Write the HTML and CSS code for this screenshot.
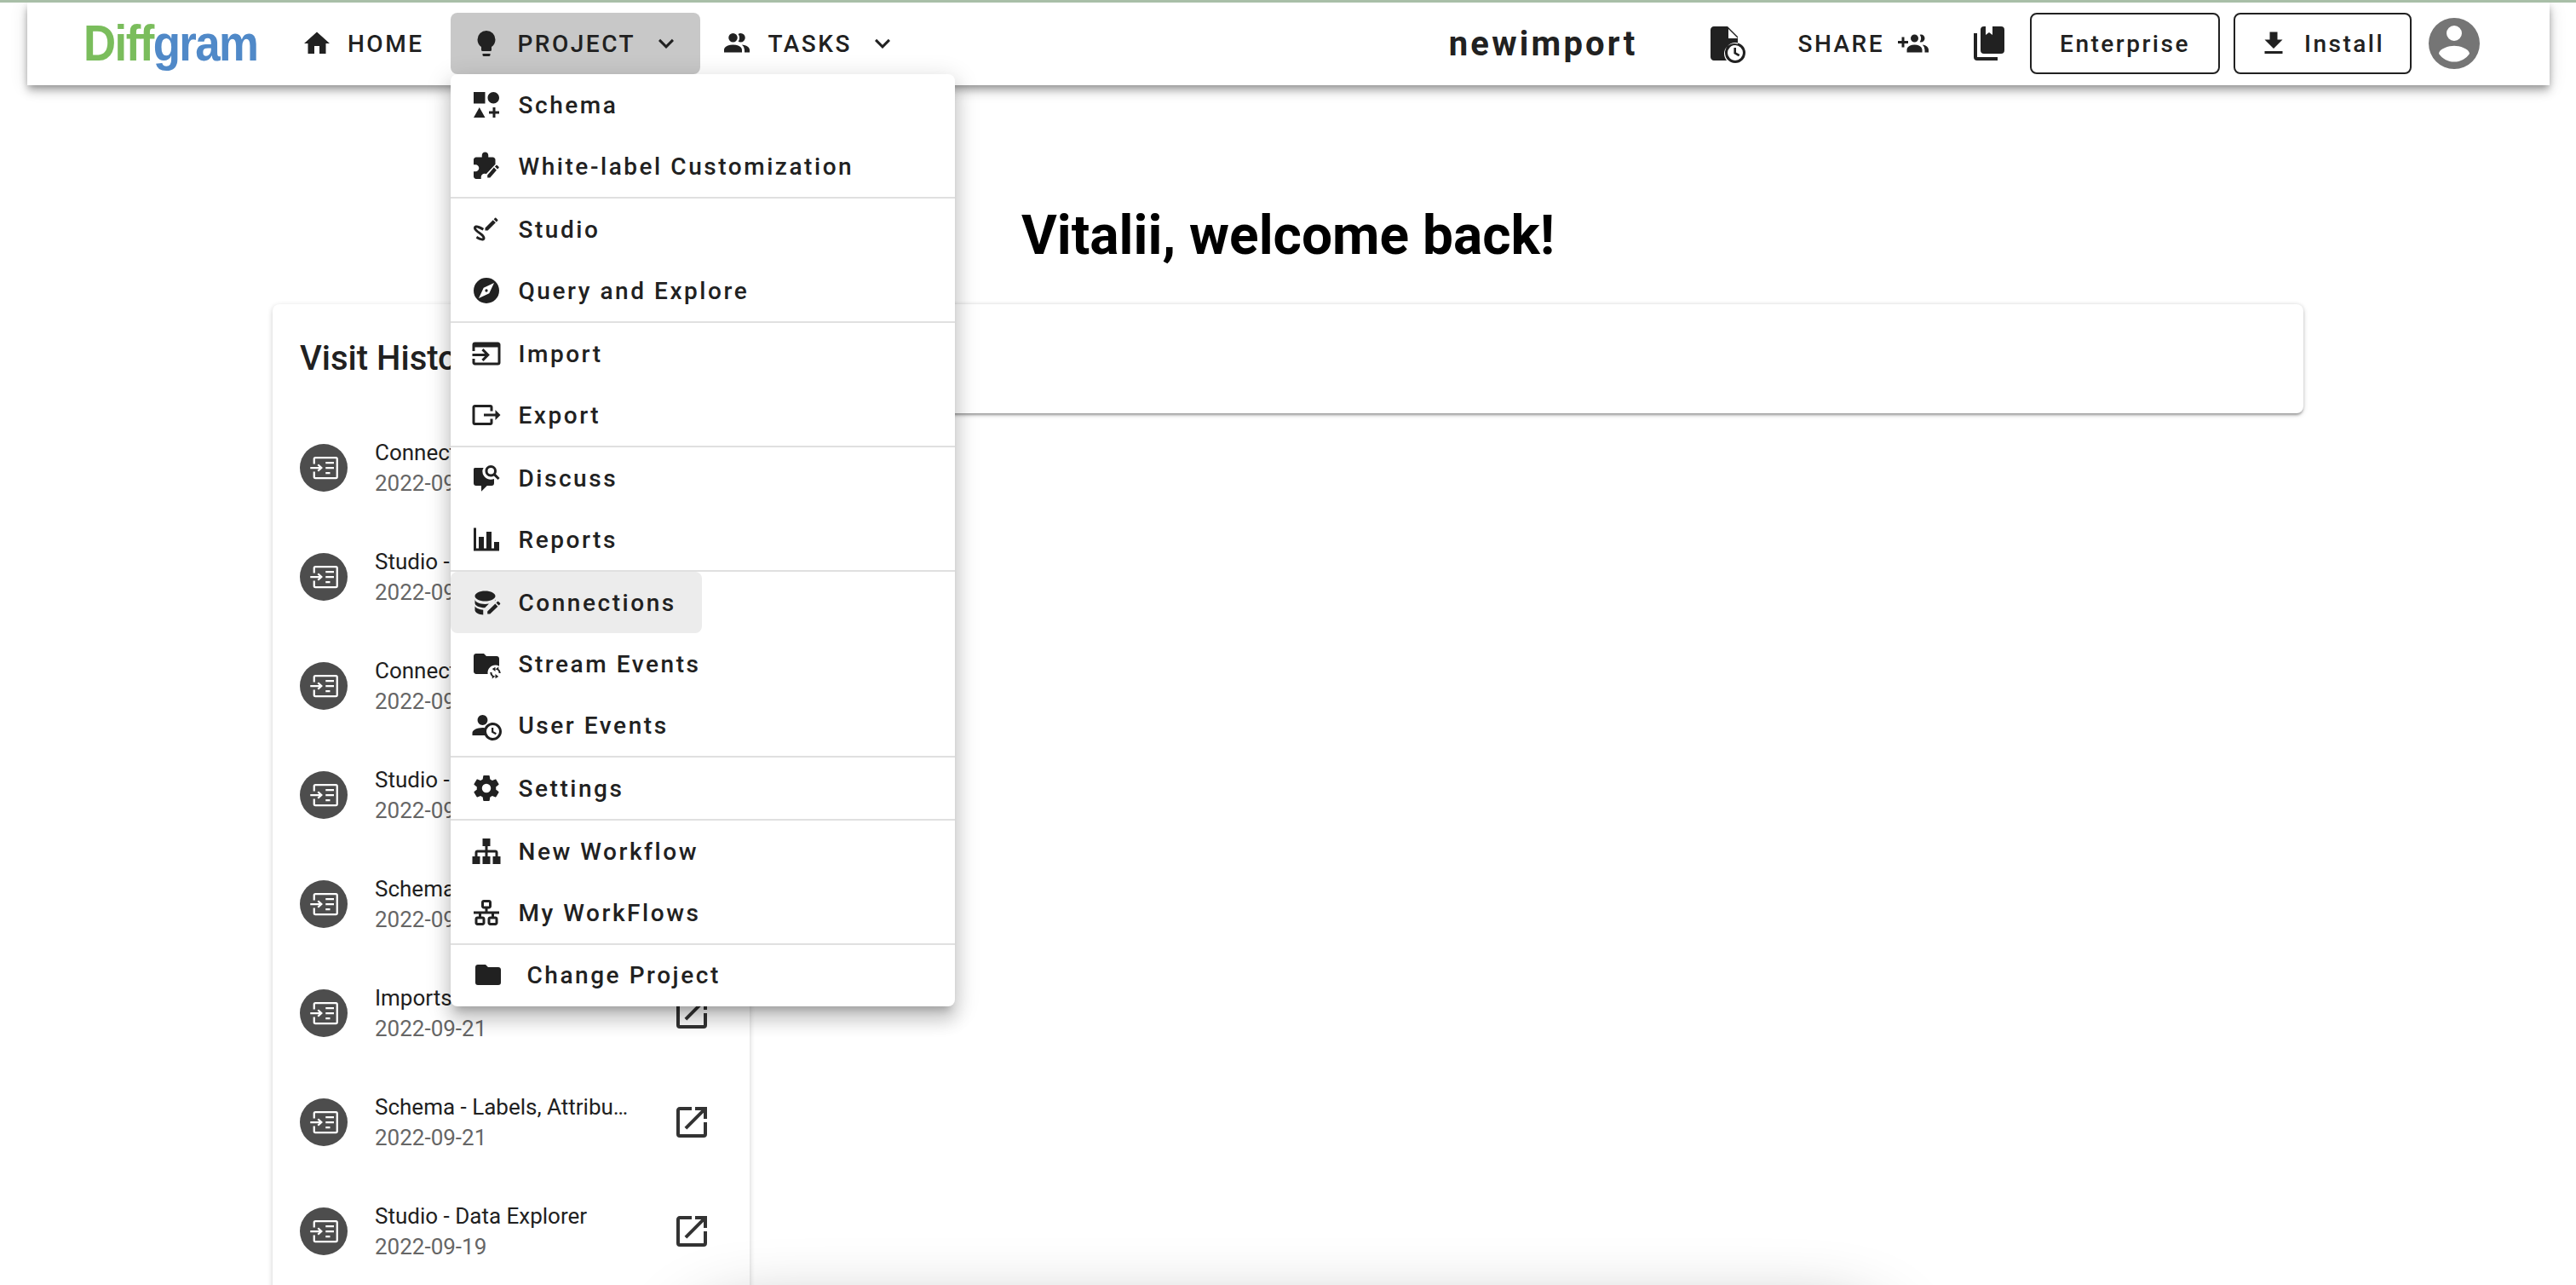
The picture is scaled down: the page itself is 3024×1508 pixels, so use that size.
FILE: index.html
```html
<!DOCTYPE html>
<html lang="en">
<head>
    <meta charset="UTF-8">
    <meta name="viewport" content="width=device-width, initial-scale=1.0">
    <title>Diffgram</title>
    <link rel="stylesheet" href="styles.css">
</head>
<body>
    <svg class="sprite" xmlns="http://www.w3.org/2000/svg">
        <symbol id="chevron" viewBox="0 0 24 24"><path d="M7.41,8.58L12,13.17L16.59,8.58L18,10L12,16L6,10L7.41,8.58Z"/></symbol>
        <symbol id="open" viewBox="0 0 24 24"><path d="M14,3V5H17.59L7.76,14.83L9.17,16.24L19,6.41V10H21V3M19,19H5V5H12V3H5C3.89,3 3,3.9 3,5V19A2,2 0 0,0 5,21H19A2,2 0 0,0 21,19V12H19V19Z"/></symbol>
        <symbol id="visit" viewBox="0 0 24 24"><path class="visit-line" d="M4.5 9V5A1 1 0 0 1 5.500 4H21.500A1 1 0 0 1 22.500 5V19A1 1 0 0 1 21.500 20H5.500A1 1 0 0 1 4.500 19V15M1.500 12H10M7.500 9.500L10.200 12L7.500 14.500M13.500 8H20M13.500 12H20M13.500 16H17"/></symbol>
    </svg>

    <header class="topbar">
        <a class="logo"><span class="logo-green">Diff</span><span class="logo-blue">gram</span></a>

        <nav class="nav">
            <a class="nav-btn nav-home">
                <svg class="icon" viewBox="0 0 24 24"><path d="M10,20V14H14V20H19V12H22L12,3L2,12H5V20H10Z"/></svg>
                HOME
            </a>
            <div class="nav-item">
                <a class="nav-btn nav-active">
                    <svg class="icon" viewBox="0 0 24 24"><path d="M12,2A7,7 0 0,0 5,9C5,11.38 6.19,13.47 8,14.74V17A1,1 0 0,0 9,18H15A1,1 0 0,0 16,17V14.74C17.81,13.47 19,11.38 19,9A7,7 0 0,0 12,2M9,21A1,1 0 0,0 10,22H14A1,1 0 0,0 15,21V20H9V21Z"/></svg>
                    PROJECT
                    <svg class="icon"><use href="#chevron"/></svg>
                </a>

                <div class="menu">
                    <a class="menu-row">
                        <svg class="icon" viewBox="0 0 24 24"><path d="M2,2H11V11H2V2M17.5,2C20,2 22,4 22,6.5C22,9 20,11 17.5,11C15,11 13,9 13,6.5C13,4 15,2 17.5,2M6.5,14L11,22H2L6.5,14M19,17H22V19H19V22H17V19H14V17H17V14H19V17Z"/></svg>
                        Schema
                    </a>
                    <a class="menu-row">
                        <svg class="icon" viewBox="0 0 24 24"><path d="M19 10.500V7C19 5.900 18.100 5 17 5H13.500V3.500C13.500 2.100 12.400 1 11 1S8.500 2.100 8.500 3.500V5H4C2.900 5 2 5.900 2 7V10.800H3.500C5 10.800 6.200 12 6.200 13.500S5 16.200 3.500 16.200H2V20C2 21.100 2.900 22 4 22H7.800V20.500C7.800 19 9 17.800 10.500 17.800C11 17.800 11.400 17.900 11.800 18.100Z"/><path d="M21.700 13.350L20.700 14.350L18.650 12.300L19.650 11.300C19.860 11.090 20.210 11.090 20.420 11.300L21.700 12.580C21.910 12.790 21.910 13.140 21.700 13.350M12.800 18.940L17.900 13.050L19.950 15.100L14.860 21H12.800V18.940Z"/></svg>
                        White-label Customization
                    </a>
                    <div class="menu-divider"></div>
                    <a class="menu-row">
                        <svg class="icon" viewBox="0 0 24 24"><path d="M9.75 20.85C11.53 20.15 11.14 18.22 10.24 17C9.35 15.75 8.12 14.89 6.88 14.06C6 13.5 5.19 12.8 4.54 12C4.26 11.67 3.69 11.06 4.27 10.94C4.86 10.82 5.88 11.4 6.4 11.62C7.31 12 8.21 12.44 9.05 12.96L10.06 11.26C8.5 10.23 6.5 9.32 4.64 9.05C3.58 8.89 2.46 9.11 2.1 10.26C1.78 11.25 2.29 12.25 2.87 13.03C4.24 14.86 6.37 15.74 7.96 17.32C8.3 17.65 8.71 18.04 8.91 18.5C9.12 18.94 9.07 18.97 8.6 18.97C7.36 18.97 5.81 18 4.8 17.36L3.79 19.06C5.32 20 7.88 21.47 9.75 20.85M20.84 5.25C21.06 5.03 21.06 4.67 20.84 4.46L19.54 3.16C19.33 2.94 18.97 2.94 18.76 3.16L17.74 4.18L19.82 6.26M11 10.92V13H13.08L19.23 6.85L17.15 4.77L11 10.92Z"/></svg>
                        Studio
                    </a>
                    <a class="menu-row">
                        <svg class="icon" viewBox="0 0 24 24"><path d="M14.19,14.19L6,18L9.81,9.81L18,6M12,2A10,10 0 0,0 2,12A10,10 0 0,0 12,22A10,10 0 0,0 22,12A10,10 0 0,0 12,2M12,10.9A1.1,1.1 0 0,0 10.9,12A1.1,1.1 0 0,0 12,13.1A1.1,1.1 0 0,0 13.1,12A1.1,1.1 0 0,0 12,10.9Z"/></svg>
                        Query and Explore
                    </a>
                    <div class="menu-divider"></div>
                    <a class="menu-row">
                        <svg class="icon" viewBox="0 0 24 24"><path d="M1,12H10.76L8.26,9.5L9.67,8.08L14.59,13L9.67,17.92L8.26,16.5L10.76,14H1V12M21,3C22.11,3 23,3.9 23,5V19A2,2 0 0,1 21,21H3C1.89,21 1,20.100 1,19V16H3V19H21V7H3V10H1V5A2,2 0 0,1 3,3H21Z"/></svg>
                        Import
                    </a>
                    <a class="menu-row">
                        <svg class="icon" viewBox="0 0 24 24"><path d="M23,12L19,8V11H10V13H19V16M1,18V6C1,4.89 1.9,4 3,4H15A2,2 0 0,1 17,6V9H15V6H3V18H15V15H17V18A2,2 0 0,1 15,20H3A2,2 0 0,1 1,18Z"/></svg>
                        Export
                    </a>
                    <div class="menu-divider"></div>
                    <a class="menu-row">
                        <svg class="icon" viewBox="0 0 24 24"><path d="M15.500,2C18,2 20,4 20,6.500C20,7.380 19.750,8.210 19.310,8.900L22.390,12L21,13.390L17.880,10.320C17.190,10.750 16.370,11 15.500,11C13,11 11,9 11,6.500C11,4 13,2 15.500,2M15.500,4A2.500,2.500 0 0,0 13,6.500A2.500,2.500 0 0,0 15.500,9A2.500,2.500 0 0,0 18,6.500A2.500,2.500 0 0,0 15.500,4M3,4H9.800C9.200,5 8.900,5.700 8.900,6.800A6.600,6.600 0 0,0 18,12.700V16A2,2 0 0,1 16,18H12.500L8,22.500V18H4A2,2 0 0,1 2,16V5A1,1 0 0,1 3,4Z"/></svg>
                        Discuss
                    </a>
                    <a class="menu-row">
                        <svg class="icon" viewBox="0 0 24 24"><path d="M22,21H2V3H4V19H6V10H10V19H12V6H16V19H18V14H22V21Z"/></svg>
                        Reports
                    </a>
                    <div class="menu-divider"></div>
                    <a class="menu-row menu-hover">
                        <svg class="icon" viewBox="0 0 24 24"><path d="M11,3C6.600,3 3,4.800 3,7C3,9.200 6.600,11 11,11C15.400,11 19,9.200 19,7C19,4.800 15.400,3 11,3M3,9.500V12.500C3,14.500 6.600,16.200 10.800,16.200L14,13C13,13.200 12,13.300 11,13.300C6.600,13.300 3,11.700 3,9.500M19,9.500C19,10 18.800,10.500 18.400,10.900L19,10.700V9.500M3,15V18C3,20 6.100,21.500 9.500,21.700V17.800C6.500,17.600 3.800,16.500 3,15Z"/><path d="M22.700,13.350L21.700,14.350L19.650,12.300L20.650,11.300C20.860,11.090 21.210,11.090 21.420,11.300L22.700,12.580C22.910,12.790 22.910,13.140 22.700,13.350M12.800,18.940L18.900,13.050L20.950,15.100L14.860,21H12.800V18.940Z"/></svg>
                        Connections
                    </a>
                    <a class="menu-row">
                        <svg class="icon" viewBox="0 0 24 24"><path d="M13,19C13,15.690 15.690,13 19,13C20.100,13 21.120,13.300 22,13.810V8C22,6.890 21.110,6 20,6H12L10,4H4C2.890,4 2,4.890 2,6V18C2,19.110 2.900,20 4,20H13.090C13.040,19.670 13,19.340 13,19M19,14.500V16.300L21.500,14.400V16A4.300,4.300 0 0,1 23.200,19.300H21.700A2.800,2.800 0 0,0 19,16.300V18L16.500,16ZM19,23.500V21.700L16.500,23.600V22A4.300,4.300 0 0,1 14.800,18.700H16.300A2.800,2.800 0 0,0 19,21.700V20L21.500,22Z"/></svg>
                        Stream Events
                    </a>
                    <a class="menu-row">
                        <svg class="icon" viewBox="0 0 24 24"><path d="M10.63,14.1C12.23,10.58 16.38,9.03 19.9,10.63C23.42,12.23 24.97,16.38 23.37,19.9C22.24,22.4 19.75,24 17,24C14.3,24 11.83,22.44 10.67,20H1V18C1.06,16.86 1.84,15.93 3.34,15.18C4.84,14.43 6.72,14.04 9,14C9.57,14 10.11,14.05 10.63,14.1V14.1M9,4C10.12,4.03 11.06,4.42 11.81,5.17C12.56,5.92 12.93,6.86 12.93,8C12.93,9.14 12.56,10.08 11.81,10.83C11.06,11.58 10.12,11.95 9,11.95C7.88,11.95 6.94,11.58 6.19,10.83C5.44,10.08 5.07,9.14 5.07,8C5.07,6.86 5.44,5.92 6.19,5.17C6.94,4.42 7.88,4.03 9,4M17,22A5,5 0 0,0 22,17A5,5 0 0,0 17,12A5,5 0 0,0 12,17A5,5 0 0,0 17,22M16,14H17.5V16.82L19.94,18.23L19.19,19.53L16,17.69V14Z"/></svg>
                        User Events
                    </a>
                    <div class="menu-divider"></div>
                    <a class="menu-row">
                        <svg class="icon" viewBox="0 0 24 24"><path d="M12,15.5A3.5,3.5 0 0,1 8.5,12A3.5,3.5 0 0,1 12,8.5A3.5,3.5 0 0,1 15.5,12A3.5,3.5 0 0,1 12,15.5M19.43,12.97C19.47,12.65 19.5,12.33 19.5,12C19.5,11.67 19.47,11.34 19.43,11L21.54,9.37C21.73,9.22 21.78,8.95 21.66,8.73L19.66,5.27C19.54,5.05 19.27,4.96 19.05,5.05L16.56,6.05C16.04,5.66 15.5,5.32 14.87,5.07L14.5,2.42C14.46,2.18 14.25,2 14,2H10C9.75,2 9.54,2.18 9.5,2.42L9.13,5.07C8.5,5.32 7.96,5.66 7.44,6.05L4.95,5.05C4.73,4.96 4.46,5.05 4.34,5.27L2.34,8.73C2.21,8.95 2.27,9.22 2.46,9.37L4.57,11C4.53,11.34 4.5,11.67 4.5,12C4.5,12.33 4.53,12.65 4.57,12.97L2.46,14.63C2.27,14.78 2.21,15.05 2.34,15.27L4.34,18.73C4.46,18.95 4.73,19.03 4.95,18.95L7.44,17.94C7.96,18.34 8.5,18.68 9.13,18.93L9.5,21.58C9.54,21.82 9.75,22 10,22H14C14.25,22 14.46,21.82 14.5,21.58L14.87,18.93C15.5,18.67 16.04,18.34 16.56,17.94L19.05,18.95C19.27,19.03 19.54,18.95 19.66,18.73L21.66,15.27C21.78,15.05 21.73,14.78 21.54,14.63L19.43,12.97Z"/></svg>
                        Settings
                    </a>
                    <div class="menu-divider"></div>
                    <a class="menu-row">
                        <svg class="icon" viewBox="0 0 24 24"><path d="M9,2V8H11V11H5C3.89,11 3,11.89 3,13V16H1V22H7V16H5V13H11V16H9V22H15V16H13V13H19V16H17V22H23V16H21V13C21,11.89 20.11,11 19,11H13V8H15V2H9Z"/></svg>
                        New Workflow
                    </a>
                    <a class="menu-row">
                        <svg class="icon" viewBox="0 0 24 24"><path d="M10,2C8.89,2 8,2.89 8,4V7C8,8.11 8.89,9 10,9H11V11H2V13H6V15H5C3.89,15 3,15.89 3,17V20C3,21.11 3.89,22 5,22H9C10.11,22 11,21.11 11,20V17C11,15.89 10.11,15 9,15H8V13H16V15H15C13.89,15 13,15.89 13,17V20C13,21.11 13.89,22 15,22H19C20.11,22 21,21.11 21,20V17C21,15.89 20.11,15 19,15H18V13H22V11H13V9H14C15.11,9 16,8.11 16,7V4C16,2.89 15.11,2 14,2H10M10,4H14V7H10V4M5,17H9V20H5V17M15,17H19V20H15V17Z"/></svg>
                        My WorkFlows
                    </a>
                    <div class="menu-divider"></div>
                    <a class="menu-row menu-change">
                        <svg class="icon" viewBox="0 0 24 24"><path d="M10,4H4C2.89,4 2,4.89 2,6V18A2,2 0 0,0 4,20H20A2,2 0 0,0 22,18V8C22,6.89 21.1,6 20,6H12L10,4Z"/></svg>
                        Change Project
                    </a>
                </div>
            </div>
            <a class="nav-btn nav-tasks">
                <svg class="icon" viewBox="0 0 24 24"><path d="M16 17V19H2V17S2 13 9 13 16 17 16 17M12.5 7.5A3.5 3.5 0 1 0 9 11A3.5 3.5 0 0 0 12.5 7.5M15.94 13A5.32 5.32 0 0 1 18 17V19H22V17S22 13.37 15.94 13M15 4A3.39 3.39 0 0 0 13.07 4.59A5 5 0 0 1 13.07 10.41A3.39 3.39 0 0 0 15 11A3.5 3.5 0 0 0 15 4Z"/></svg>
                TASKS
                <svg class="icon"><use href="#chevron"/></svg>
            </a>
        </nav>

        <div class="topbar-right">
            <span class="project-name">newimport</span>
            <svg class="icon icon-lg file-clock" viewBox="0 0 24 24"><path fill-rule="evenodd" d="M12,2H4C2.900,2 2,2.900 2,4V20C2,21.100 2.900,22 4,22H11.500C10.600,20.900 10,19.500 10,18C10,14.700 12.700,12 16,12C16.700,12 17.400,12.100 18,12.400V8L12,2M12.500,9V3.500L18,9H12.500M16.500,23.500A6,6 0 1,0 16.500,11.500A6,6 0 1,0 16.500,23.500M16.500,22A4.500,4.500 0 1,1 16.500,13A4.500,4.500 0 1,1 16.500,22M15.700,14.500H17V17.200L19.200,18.500L18.500,19.600L15.700,18Z"/></svg>
            <a class="share-btn">
                SHARE
                <svg class="icon" viewBox="0 0 24 24"><path d="M19 17V19H7V17S7 13 13 13 19 17 19 17M16 8A3 3 0 1 0 13 11A3 3 0 0 0 16 8M19.2 13.06A5.6 5.6 0 0 1 21 17V19H24V17S24 13.55 19.2 13.06M18 5A2.91 2.91 0 0 0 17.11 5.14A5 5 0 0 1 17.11 10.86A2.91 2.91 0 0 0 18 11A3 3 0 0 0 18 5M8 10H5V7H3V10H0V12H3V15H5V12H8Z"/></svg>
            </a>
            <svg class="icon icon-lg book" viewBox="0 0 24 24"><path d="M19,18H9A2,2 0 0,1 7,16V4A2,2 0 0,1 9,2H10V7L12,5.5L14,7V2H19A2,2 0 0,1 21,4V16A2,2 0 0,1 19,18M17,20V22H5A2,2 0 0,1 3,20V6H5V20H17Z"/></svg>
            <a class="outline-btn btn-enterprise">Enterprise</a>
            <a class="outline-btn btn-install">
                <svg class="icon" viewBox="0 0 24 24"><path d="M5,20H19V18H5M19,9H15V3H9V9H5L12,16L19,9Z"/></svg>
                Install
            </a>
            <svg class="avatar" viewBox="0 0 24 24"><path d="M12,19.2C9.5,19.2 7.29,17.92 6,16C6.03,14 10,12.9 12,12.9C14,12.9 17.97,14 18,16C16.71,17.92 14.5,19.2 12,19.2M12,5A3,3 0 0,1 15,8A3,3 0 0,1 12,11A3,3 0 0,1 9,8A3,3 0 0,1 12,5M12,2A10,10 0 0,0 2,12A10,10 0 0,0 12,22A10,10 0 0,0 22,12A10,10 0 0,0 12,2Z"/></svg>
        </div>
    </header>

    <main class="page">
        <h1 class="welcome">Vitalii, welcome back!</h1>

        <div class="columns">
            <section class="history-card">
                <h2 class="history-title">Visit History</h2>

                <div class="history-row">
                    <span class="history-dot"><svg><use href="#visit"/></svg></span>
                    <div class="history-text"><div class="history-name">Connections</div><div class="history-date">2022-09-21</div></div>
                    <svg class="history-open"><use href="#open"/></svg>
                </div>
                <div class="history-row">
                    <span class="history-dot"><svg><use href="#visit"/></svg></span>
                    <div class="history-text"><div class="history-name">Studio - Data Explorer</div><div class="history-date">2022-09-21</div></div>
                    <svg class="history-open"><use href="#open"/></svg>
                </div>
                <div class="history-row">
                    <span class="history-dot"><svg><use href="#visit"/></svg></span>
                    <div class="history-text"><div class="history-name">Connections</div><div class="history-date">2022-09-21</div></div>
                    <svg class="history-open"><use href="#open"/></svg>
                </div>
                <div class="history-row">
                    <span class="history-dot"><svg><use href="#visit"/></svg></span>
                    <div class="history-text"><div class="history-name">Studio - Data Explorer</div><div class="history-date">2022-09-21</div></div>
                    <svg class="history-open"><use href="#open"/></svg>
                </div>
                <div class="history-row">
                    <span class="history-dot"><svg><use href="#visit"/></svg></span>
                    <div class="history-text"><div class="history-name">Schema - Labels, Attributes</div><div class="history-date">2022-09-21</div></div>
                    <svg class="history-open"><use href="#open"/></svg>
                </div>
                <div class="history-row">
                    <span class="history-dot"><svg><use href="#visit"/></svg></span>
                    <div class="history-text"><div class="history-name">Imports</div><div class="history-date">2022-09-21</div></div>
                    <svg class="history-open"><use href="#open"/></svg>
                </div>
                <div class="history-row">
                    <span class="history-dot"><svg><use href="#visit"/></svg></span>
                    <div class="history-text"><div class="history-name">Schema - Labels, Attributes, and Instance Templates</div><div class="history-date">2022-09-21</div></div>
                    <svg class="history-open"><use href="#open"/></svg>
                </div>
                <div class="history-row">
                    <span class="history-dot"><svg><use href="#visit"/></svg></span>
                    <div class="history-text"><div class="history-name">Studio - Data Explorer</div><div class="history-date">2022-09-19</div></div>
                    <svg class="history-open"><use href="#open"/></svg>
                </div>
            </section>

            <section class="summary-card"></section>
        </div>
    </main>

    <div class="offscreen-panel"></div>
</body>
</html>
```

FILE: styles.css
```css
* {
    box-sizing: border-box;
}

html, body {
    height: 1508px;
    overflow: hidden;
}

body {
    margin: 0;
    padding: 0;
    background: #ffffff;
    font-family: Roboto, "Noto Sans", sans-serif;
    color: #212121;
    border-top: 3px solid #a9bfa8;
    position: relative;
}

.sprite {
    display: none;
}

.icon {
    width: 36px;
    height: 36px;
    fill: currentColor;
    flex: none;
}

.icon-lg {
    width: 48px;
    height: 48px;
}

/* Top bar */
.topbar {
    position: relative;
    z-index: 5;
    height: 97px;
    margin: 0 31px 0 32px;
    padding: 0 76px 1px 66px;
    background: #ffffff;
    display: flex;
    align-items: center;
    box-shadow: 0 4px 8px -2px rgba(0, 0, 0, 0.3), 0 8px 10px rgba(0, 0, 0, 0.16), 0 2px 20px rgba(0, 0, 0, 0.12);
}

.logo {
    font-family: "Liberation Sans", Arial, sans-serif;
    font-weight: 700;
    font-size: 60px;
    letter-spacing: -1.8px;
    line-height: 1;
    width: 224px;
    flex: none;
    white-space: nowrap;
    transform: scaleX(0.88);
    transform-origin: left center;
}

.logo-green {
    color: #7abd5c;
}

.logo-blue {
    color: #5089c8;
}

.nav {
    display: flex;
    align-items: center;
}

.nav-item {
    position: relative;
}

.nav-btn {
    height: 72px;
    display: flex;
    align-items: center;
    gap: 18px;
    font-size: 28px;
    font-weight: 470;
    letter-spacing: 2.5px;
    border-radius: 8px;
    white-space: nowrap;
}

.nav-home {
    padding: 0 32px;
}

.nav-active {
    width: 293px;
    padding: 0 22px 0 24px;
    background: #c8c8c8;
}

.nav-tasks {
    padding: 0 22px 0 25px;
}

.topbar-right {
    margin-left: auto;
    display: flex;
    align-items: center;
}

.project-name {
    font-size: 40px;
    font-weight: 700;
    letter-spacing: 3.2px;
    margin-right: 82px;
}

.share-btn {
    display: flex;
    align-items: center;
    gap: 16px;
    font-size: 28px;
    font-weight: 470;
    letter-spacing: 2.5px;
    margin-left: 58px;
}

.book {
    margin-left: 47px;
}

.outline-btn {
    height: 72px;
    display: flex;
    align-items: center;
    gap: 18px;
    border: 2px solid #212121;
    border-radius: 8px;
    font-size: 28px;
    font-weight: 470;
    letter-spacing: 2.5px;
}

.btn-enterprise {
    width: 223px;
    justify-content: center;
    margin-left: 24px;
}

.btn-install {
    width: 209px;
    padding-left: 27px;
    margin-left: 16px;
}

.avatar {
    width: 72px;
    height: 72px;
    margin-left: 14px;
    fill: #757575;
}

/* Project dropdown */
.menu {
    position: absolute;
    top: 72px;
    left: 0;
    z-index: 10;
    width: 592px;
    background: #ffffff;
    border-radius: 8px;
    box-shadow: 0 10px 10px -6px rgba(0, 0, 0, 0.2), 0 16px 20px 2px rgba(0, 0, 0, 0.14), 0 6px 28px 4px rgba(0, 0, 0, 0.12);
}

.menu-row {
    height: 72px;
    display: flex;
    align-items: center;
    gap: 19px;
    padding-left: 24px;
    font-size: 28px;
    font-weight: 470;
    letter-spacing: 2.55px;
    white-space: nowrap;
}

.menu-divider {
    height: 2px;
    background: #e0e0e0;
}

.menu-hover {
    width: 295px;
    background: #ececec;
    border-radius: 8px;
}

.menu-change {
    padding-left: 26px;
    padding-bottom: 2px;
    gap: 27px;
}

/* Page body */
.page {
    padding-left: 320px;
    width: 2704px;
}

.welcome {
    margin: 0;
    padding: 137px 0 40px;
    width: 2384px;
    text-align: center;
    font-size: 64px;
    line-height: 80px;
    font-weight: 700;
    color: #000000;
}

.columns {
    display: flex;
    align-items: flex-start;
}

.history-card {
    width: 560px;
    height: 1300px;
    flex: none;
    padding: 32px 32px 0;
    background: #ffffff;
    border-radius: 8px;
    box-shadow: 0 2px 6px rgba(0, 0, 0, 0.2);
}

.history-title {
    margin: 0 0 32px;
    font-size: 40px;
    line-height: 64px;
    font-weight: 500;
    white-space: nowrap;
}

.history-row {
    height: 128px;
    display: flex;
    align-items: center;
}

.history-dot {
    width: 56px;
    height: 56px;
    flex: none;
    border-radius: 50%;
    background: #4d4d4d;
    display: flex;
    align-items: center;
    justify-content: center;
}

.history-dot svg {
    width: 36px;
    height: 36px;
}

.visit-line {
    fill: none;
    stroke: #ffffff;
    stroke-width: 1.5;
}

.history-text {
    width: 304px;
    margin-left: 32px;
}

.history-name {
    font-size: 26px;
    line-height: 36px;
    font-weight: 400;
    white-space: nowrap;
    overflow: hidden;
    text-overflow: ellipsis;
}

.history-date {
    font-size: 26px;
    line-height: 36px;
    color: #666666;
}

.history-open {
    width: 48px;
    height: 48px;
    flex: none;
    margin-left: 44px;
    fill: #333333;
}

.summary-card {
    flex: 1;
    height: 128px;
    background: #ffffff;
    border-radius: 8px;
    box-shadow: 0 3px 3px -1px rgba(0, 0, 0, 0.3), 0 2px 6px rgba(0, 0, 0, 0.14), 0 0 4px rgba(0, 0, 0, 0.1);
}

/* The next panel sits below the fold, only its shadow shows */
.offscreen-panel {
    position: absolute;
    top: 1570px;
    left: 835px;
    width: 1355px;
    height: 200px;
    border-radius: 40px;
    box-shadow: 0 0 90px 20px rgba(0, 0, 0, 0.45);
}
```
